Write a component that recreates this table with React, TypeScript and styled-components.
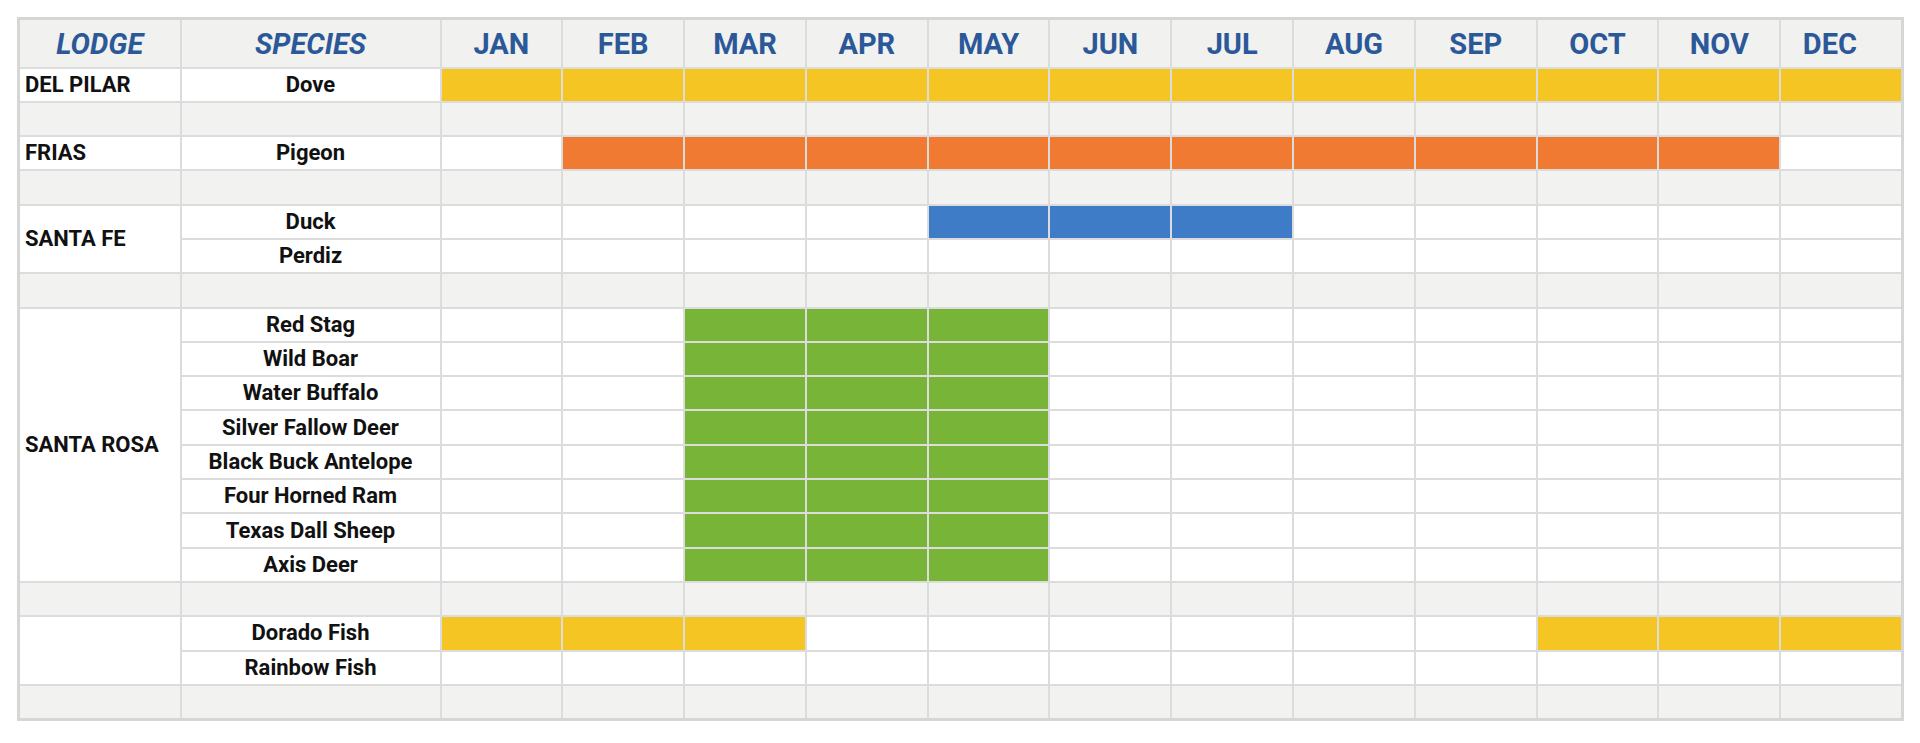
import React from "react";
import styled, { createGlobalStyle } from "styled-components";

const Global = createGlobalStyle`
  html, body { margin: 0; padding: 0; background: #ffffff; }
  body { padding: 17px 0 0 17px; font-family: Roboto, "Liberation Sans", Arial, sans-serif; }
`;

const COLORS: Record<string, string> = {
  y: "#f5c524",
  o: "#f17a32",
  b: "#3f7cc7",
  g: "#78b437",
};

const MONTHS = ["JAN", "FEB", "MAR", "APR", "MAY", "JUN", "JUL", "AUG", "SEP", "OCT", "NOV", "DEC"];

const Table = styled.table`
  border-collapse: collapse;
  table-layout: fixed;
  width: 1884px;
  border: 3px solid #d6d6d6;
  font-family: Roboto, "Liberation Sans", Arial, sans-serif;
  font-weight: 700;
`;

const HeadRow = styled.tr`
  height: 49px;
  background: #f1f1ef;
`;

const BodyRow = styled.tr<{ $spacer?: boolean }>`
  height: 34.3px;
  background: ${(p) => (p.$spacer ? "#f2f2f0" : "#ffffff")};
`;

const HeadCell = styled.th<{ $italic?: boolean; $shift?: number }>`
  border: 2px solid #dcdcdc;
  color: #2b5899;
  font-size: 29px;
  font-weight: 700;
  font-style: ${(p) => (p.$italic ? "italic" : "normal")};
  text-align: center;
  padding: 3px ${(p) => p.$shift ?? 0}px 0 0;
  line-height: 1;
`;

const LodgeCell = styled.td`
  border: 2px solid #dcdcdc;
  color: #111111;
  font-size: 22px;
  text-align: left;
  padding: 0 0 0 5px;
  vertical-align: middle;
  line-height: 1;
`;

const SpeciesCell = styled.td`
  border: 2px solid #dcdcdc;
  color: #111111;
  font-size: 22px;
  text-align: center;
  padding: 0;
  line-height: 1;
`;

const MonthCell = styled.td<{ $fill?: string }>`
  border: 2px solid #dcdcdc;
  padding: 0;
  background: ${(p) => (p.$fill ? COLORS[p.$fill] : "transparent")};
`;

const SpacerCell = styled.td`
  border: 2px solid #dcdcdc;
  padding: 0;
`;

type Row =
  | { kind: "spacer" }
  | { kind: "data"; lodge?: string; span?: number; skipLodge?: boolean; species: string; fill?: string; months?: number[] };

const range = (a: number, b: number) => Array.from({ length: b - a + 1 }, (_, i) => a + i);

const ROSA = [
  "Red Stag",
  "Wild Boar",
  "Water Buffalo",
  "Silver Fallow Deer",
  "Black Buck Antelope",
  "Four Horned Ram",
  "Texas Dall Sheep",
  "Axis Deer",
];

const rows: Row[] = [
  { kind: "data", lodge: "DEL PILAR", species: "Dove", fill: "y", months: range(0, 11) },
  { kind: "spacer" },
  { kind: "data", lodge: "FRIAS", species: "Pigeon", fill: "o", months: range(1, 10) },
  { kind: "spacer" },
  { kind: "data", lodge: "SANTA FE", span: 2, species: "Duck", fill: "b", months: range(4, 6) },
  { kind: "data", skipLodge: true, species: "Perdiz" },
  { kind: "spacer" },
  ...ROSA.map((s, i): Row => ({
    kind: "data",
    lodge: i === 0 ? "SANTA ROSA" : undefined,
    span: i === 0 ? 8 : undefined,
    skipLodge: i !== 0,
    species: s,
    fill: "g",
    months: range(2, 4),
  })),
  { kind: "spacer" },
  { kind: "data", lodge: "", span: 2, species: "Dorado Fish", fill: "y", months: [0, 1, 2, 9, 10, 11] },
  { kind: "data", skipLodge: true, species: "Rainbow Fish" },
  { kind: "spacer" },
];

export default function App() {
  return (
    <>
      <Global />
      <Table>
        <colgroup>
          <col style={{ width: 162 }} />
          <col style={{ width: 260 }} />
          {MONTHS.map((m) => (
            <col key={m} style={{ width: 121.8 }} />
          ))}
        </colgroup>
        <thead>
          <HeadRow>
            <HeadCell $italic>LODGE</HeadCell>
            <HeadCell $italic>SPECIES</HeadCell>
            {MONTHS.map((m) => (
              <HeadCell key={m} $shift={m === "DEC" ? 22 : 0}>
                {m}
              </HeadCell>
            ))}
          </HeadRow>
        </thead>
        <tbody>
          {rows.map((r, i) =>
            r.kind === "spacer" ? (
              <BodyRow key={i} $spacer>
                {Array.from({ length: 14 }, (_, j) => (
                  <SpacerCell key={j} />
                ))}
              </BodyRow>
            ) : (
              <BodyRow key={i}>
                {!r.skipLodge && <LodgeCell rowSpan={r.span ?? 1}>{r.lodge}</LodgeCell>}
                <SpeciesCell>{r.species}</SpeciesCell>
                {MONTHS.map((m, j) => (
                  <MonthCell key={m} $fill={r.months?.includes(j) ? r.fill : undefined} />
                ))}
              </BodyRow>
            )
          )}
        </tbody>
      </Table>
    </>
  );
}
